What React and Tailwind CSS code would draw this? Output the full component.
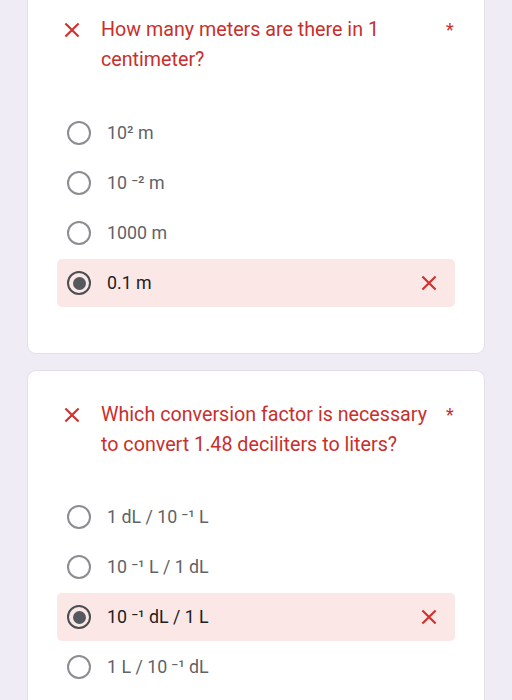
import React from 'react';

const RED = 'text-[#c8302d]';

function XMark({ className = '' }) {
  return (
    <svg viewBox="0 0 24 24" className={className} fill="none" stroke="currentColor" strokeWidth="2.6" strokeLinecap="square">
      <path d="M5 5 L19 19 M19 5 L5 19" />
    </svg>
  );
}

function Radio({ checked }) {
  if (checked) {
    return (
      <span className="flex h-[24px] w-[24px] shrink-0 items-center justify-center rounded-full border-[2.5px] border-[#4a4d52]">
        <span className="h-[13px] w-[13px] rounded-full bg-[#55585d]" />
      </span>
    );
  }
  return <span className="h-[24px] w-[24px] shrink-0 rounded-full border-[2px] border-[#8a8d91]" />;
}

function Option({ label, selected }) {
  return (
    <div
      className={
        'flex h-[48px] items-center rounded-[5px] pl-[10px] pr-[16px] ' +
        (selected ? 'bg-[#fbe8e6]' : '')
      }
    >
      <Radio checked={selected} />
      <span className={'ml-[16px] flex-1 text-[17.8px] ' + (selected ? 'text-[#202124]' : 'text-[#5f6368]')}>
        {label}
      </span>
      {selected && <XMark className="h-[20px] w-[20px] text-[#d0322f]" />}
    </div>
  );
}

function Question({ lines, options, selected, className, gap }) {
  return (
    <div className={'border border-[#e2dfea] bg-white px-[29px] ' + className}>
      <div className="flex items-start">
        <div className="flex h-[30px] w-[44px] shrink-0 items-center pl-[5px]">
          <XMark className="h-[20px] w-[20px] text-[#d0322f]" />
        </div>
        <div className={'flex-1 text-[19.7px] leading-[30px] ' + RED}>
          {lines.map((l) => (
            <div key={l} className="whitespace-nowrap">{l}</div>
          ))}
        </div>
        <div className={'-mr-[10px] w-[30px] shrink-0 text-center text-[18px] leading-[30px] ' + RED}>*</div>
      </div>
      <div className={'flex flex-col gap-[2px] ' + gap}>
        {options.map((o, i) => (
          <Option key={o} label={o} selected={i === selected} />
        ))}
      </div>
    </div>
  );
}

export default function App() {
  return (
    <div
      className="h-[700px] overflow-hidden bg-[#efecf6] pl-[27px] pr-[27px]"
      style={{ fontFamily: 'Roboto, "Noto Sans", sans-serif' }}
    >
      <Question
        className="rounded-b-[9px] border-t-0 pt-[15px] pb-[46px]"
        gap="mt-[34px]"
        lines={['How many meters are there in 1', 'centimeter?']}
        options={['10² m', '10 ⁻² m', '1000 m', '0.1 m']}
        selected={3}
      />
      <div className="h-[16px]" />
      <Question
        className="rounded-t-[9px] pt-[29px] pb-[40px]"
        gap="mt-[33px]"
        lines={['Which conversion factor is necessary', 'to convert 1.48 deciliters to liters?']}
        options={['1 dL / 10 ⁻¹ L', '10 ⁻¹ L / 1 dL', '10 ⁻¹ dL / 1 L', '1 L / 10 ⁻¹ dL']}
        selected={2}
      />
    </div>
  );
}
